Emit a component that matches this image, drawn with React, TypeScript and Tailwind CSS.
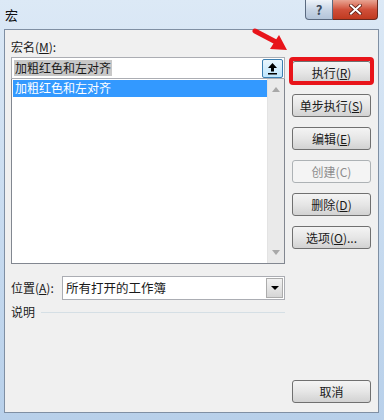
import React from 'react';

const FONT = { fontFamily: '"Noto Sans CJK SC", "Noto Sans", sans-serif' };

const Btn = ({ children, disabled }: { children: React.ReactNode; disabled?: boolean }) => (
    <div
        className={
            'flex h-[23px] w-[79px] items-center justify-center rounded-[3px] border text-[12px] ' +
            (disabled
                ? 'border-[#adb2b5] bg-[#f4f4f4] text-[#8d8d8d]'
                : 'border-[#707070] bg-gradient-to-b from-[#f4f4f4] via-[#e6e6e6] to-[#d2d2d2] text-[#1a1a1a]')
        }
    >
        {children}
    </div>
);

export default function App() {
    return (
        <div style={FONT} className="relative flex h-[420px] w-[384px] flex-col bg-gradient-to-b from-[#dce9f6] via-[#c9dcf0] to-[#b8d0ea]">
            {/* title bar */}
            <div className="flex h-[29px] items-start justify-between">
                <span className="ml-[5px] mt-[7px] text-[13px] leading-[16px] text-[#111]">宏</span>
                <div className="mr-[6px] flex">
                    <div className="flex h-[20px] w-[28px] items-center justify-center rounded-bl-[4px] border border-t-0 border-[#5a6a80] bg-gradient-to-b from-[#eef3f9] via-[#c9d6e6] to-[#b3c4d9] text-[13px] font-bold leading-none text-[#3c4a5c]">
                        ?
                    </div>
                    <div className="flex h-[20px] w-[45px] items-center justify-center rounded-br-[4px] border border-l-0 border-t-0 border-[#6a2a20] bg-gradient-to-b from-[#e8a493] via-[#d0503a] to-[#c0391f]">
                        <svg width="13" height="11" viewBox="0 0 13 11">
                            <path d="M2 1.5 L11 9.5 M11 1.5 L2 9.5" stroke="#5a1a10" strokeWidth="3.6" strokeLinecap="square" />
                            <path d="M2 1.5 L11 9.5 M11 1.5 L2 9.5" stroke="#ffffff" strokeWidth="2" strokeLinecap="square" />
                        </svg>
                    </div>
                </div>
            </div>

            {/* client area */}
            <div className="ml-[4px] mr-[5px] flex h-[384px] border border-[#7f8fa3] bg-[#f0f0f0] text-[12px] text-[#1a1a1a]">
                {/* left column */}
                <div className="ml-[6px] flex w-[274px] flex-col">
                    <div className="mt-[9px] h-[18px] leading-[16px]">
                        宏名(<span className="underline">M</span>):
                    </div>
                    <div className="flex h-[22px] items-center justify-between border border-[#abadb3] bg-white pl-[2px] pr-[1px]">
                        <span className="bg-[#c8c8c8] px-[1px] leading-[16px]">加粗红色和左对齐</span>
                        <div className="flex h-[19px] w-[21px] items-center justify-center rounded-[2px] border border-[#3c7fb1] bg-gradient-to-b from-[#eaf6fd] to-[#bee6fd]">
                            <svg width="11" height="13" viewBox="0 0 11 13">
                                <path d="M5.5 1 L10 6 L7 6 L7 9.5 L4 9.5 L4 6 L1 6 Z" fill="#000" />
                                <rect x="1" y="11" width="9" height="1.5" fill="#000" />
                            </svg>
                        </div>
                    </div>
                    <div className="flex h-[185px] border border-t-0 border-[#828790] bg-white">
                        <div className="flex-1 pl-[1px] pt-[1px]">
                            <div className="h-[17px] bg-[#3399ff] pl-[2px] leading-[16px] text-white">加粗红色和左对齐</div>
                        </div>
                        <div className="flex w-[17px] flex-col items-center justify-between border-l border-[#e3e3e3] bg-[#eaeaea] py-[8px]">
                            <svg width="8" height="5" viewBox="0 0 8 5"><path d="M0 5 L4 0 L8 5 Z" fill="#a8a8a8" /></svg>
                            <svg width="8" height="5" viewBox="0 0 8 5"><path d="M0 0 L4 5 L8 0 Z" fill="#a8a8a8" /></svg>
                        </div>
                    </div>
                    <div className="mt-[12px] flex items-center">
                        <span className="w-[51px] leading-[16px]">
                            位置(<span className="underline">A</span>):
                        </span>
                        <div className="flex h-[24px] flex-1 items-center justify-between border border-[#abadb3] bg-white pl-[3px] pr-[1px]">
                            <span className="text-[12.5px] leading-[16px]">所有打开的工作簿</span>
                            <div className="flex h-[20px] w-[17px] items-center justify-center border border-[#acacac] bg-gradient-to-b from-[#f2f2f2] to-[#d6d6d6]">
                                <svg width="8" height="4" viewBox="0 0 8 4"><path d="M0 0 L4 4 L8 0 Z" fill="#000" /></svg>
                            </div>
                        </div>
                    </div>
                    <div className="mt-[4px] flex items-center">
                        <span className="leading-[16px]">说明</span>
                        <div className="ml-[6px] h-px flex-1 bg-[#d5dfe5]" />
                    </div>
                </div>

                {/* right column */}
                <div className="ml-[7px] flex flex-1 flex-col">
                    <div className="relative mt-[31px]">
                        <Btn>执行(<span className="underline">R</span>)</Btn>
                        <div className="pointer-events-none absolute left-[-3px] top-[-4px] h-[28px] w-[85px] rounded-[4px] border-[4px] border-[#e8141a]" />
                    </div>
                    <div className="mt-[10px] flex flex-col gap-[10px]">
                        <Btn>单步执行(<span className="underline">S</span>)</Btn>
                        <Btn>编辑(<span className="underline">E</span>)</Btn>
                        <Btn disabled>创建(C)</Btn>
                        <Btn>删除(<span className="underline">D</span>)</Btn>
                        <Btn>选项(<span className="underline">O</span>)...</Btn>
                    </div>
                    <div className="mt-auto mb-[9px]">
                        <Btn>取消</Btn>
                    </div>
                </div>
            </div>

            {/* red pointer arrow */}
            <svg className="absolute left-[252px] top-[28px]" width="38" height="26" viewBox="0 0 38 26">
                <path d="M3 3 L24 14" stroke="#e8141a" strokeWidth="5" strokeLinecap="round" />
                <path d="M35 22 L18 21 L27 7 Z" fill="#e8141a" />
            </svg>
        </div>
    );
}
